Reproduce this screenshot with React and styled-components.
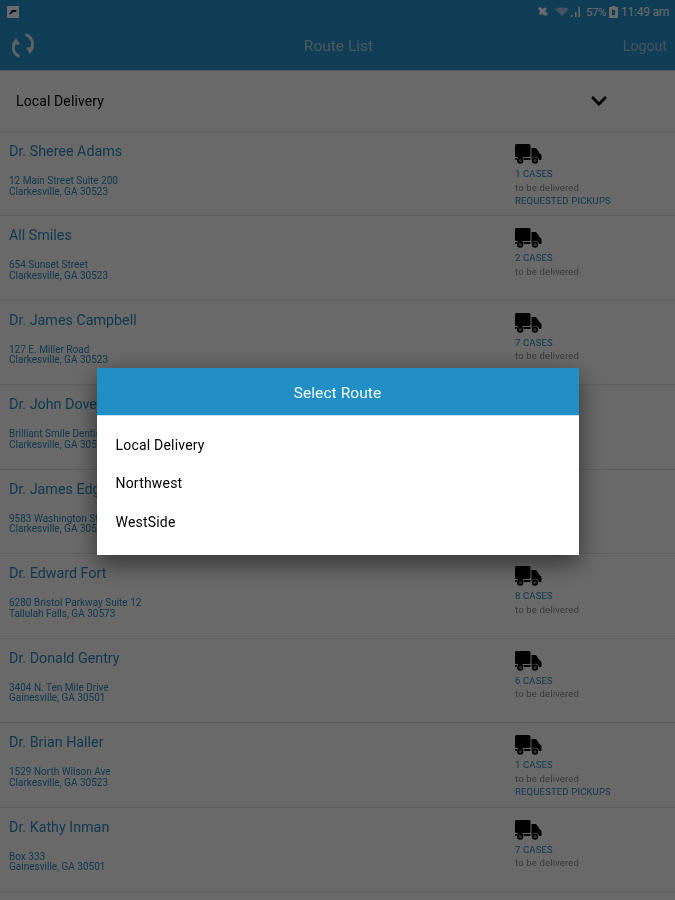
import styled, { createGlobalStyle } from "styled-components";
import { FaChevronDown } from "react-icons/fa";

const stops = [
  { name: "Dr. Sheree Adams", line1: "12 Main Street Suite 200", line2: "Clarkesville, GA 30523", cases: 1, pickups: true },
  { name: "All Smiles", line1: "654 Sunset Street", line2: "Clarkesville, GA 30523", cases: 2 },
  { name: "Dr. James Campbell", line1: "127 E. Miller Road", line2: "Clarkesville, GA 30523", cases: 7 },
  { name: "Dr. John Dove", line1: "Brilliant Smile Dentistry", line2: "Clarkesville, GA 30523", cases: 3 },
  { name: "Dr. James Edge", line1: "9583 Washington Street", line2: "Clarkesville, GA 30523", cases: 4 },
  { name: "Dr. Edward Fort", line1: "6280 Bristol Parkway Suite 12", line2: "Tallulah Falls, GA 30573", cases: 8 },
  { name: "Dr. Donald Gentry", line1: "3404 N. Ten Mile Drive", line2: "Gainesville, GA 30501", cases: 6 },
  { name: "Dr. Brian Haller", line1: "1529 North Wilson Ave", line2: "Clarkesville, GA 30523", cases: 1, pickups: true },
  { name: "Dr. Kathy Inman", line1: "Box 333", line2: "Gainesville, GA 30501", cases: 7 },
];

const routes = ["Local Delivery", "Northwest", "WestSide"];

const GlobalStyle = createGlobalStyle`
  html, body {
    margin: 0;
    height: 900px;
    overflow: hidden;
    background: #fff;
    font-family: Roboto, "Liberation Sans", sans-serif;
  }
`;

const Page = styled.div`
  position: relative;
  width: 675px;
  height: 900px;
  overflow: hidden;
  filter: blur(0.45px);
`;

const Header = styled.header`
  height: 71px;
  box-sizing: border-box;
  background: #2695d0;
  color: #fff;
  display: flex;
  flex-direction: column;
  border-bottom: 1px solid #cfd6da;
`;

const StatusBar = styled.div`
  height: 24px;
  display: flex;
  align-items: center;
  padding: 0 6px 0 7px;
  font-size: 12px;
`;

const StatusRight = styled.div`
  margin-left: auto;
  display: flex;
  align-items: center;
  gap: 3px;
  letter-spacing: -0.25px;
`;

const Percent = styled.span`
  font-size: 11.5px;
  letter-spacing: -0.4px;
`;

const TitleBar = styled.div`
  flex: 1;
  display: grid;
  grid-template-columns: 1fr auto 1fr;
  align-items: center;
  padding: 0 8px 3px 10px;
`;

const Title = styled.div`
  font-size: 15.5px;
  color: #b5d3e3;
`;

const Logout = styled.div`
  padding-top: 1px;
  font-size: 14.2px;
  color: #a9cbde;
  justify-self: end;
`;

const Picker = styled.div`
  height: 61px;
  box-sizing: border-box;
  display: flex;
  align-items: center;
  justify-content: space-between;
  padding: 0 67px 1px 16px;
  font-size: 14px;
  letter-spacing: 0.12px;
  color: #000;
  border-bottom: 1px solid #e2e2e2;
`;

const Row = styled.div`
  height: 84.45px;
  box-sizing: border-box;
  display: grid;
  grid-template-columns: 515px 1fr;
  padding: 10px 0 0 9px;
  border-bottom: 1px solid #e2e2e2;
`;

const Left = styled.div`
  display: flex;
  flex-direction: column;
`;

const Name = styled.div`
  font-size: 14.3px;
  line-height: 18px;
  color: #2a8cc2;
`;

const Address = styled.div`
  margin-top: 16px;
  font-size: 10px;
  line-height: 10.5px;
  color: #2a8cc2;
`;

const Right = styled.div`
  display: flex;
  flex-direction: column;
  margin: 2px 0 0 -9px;
`;

const Small = styled.div`
  font-size: 9.5px;
  line-height: 13.5px;
  letter-spacing: 0.16px;
  color: ${(p) => (p.$muted ? "#8a8a8a" : "#2a8cc2")};
`;

const Cases = styled(Small)`
  margin-top: 3px;
`;

const Overlay = styled.div`
  position: absolute;
  inset: 0;
  background: rgba(0, 0, 0, 0.59);
  display: flex;
  justify-content: center;
  padding-top: 368px;
`;

const Dialog = styled.div`
  width: 482px;
  height: 187px;
  background: #fff;
  box-shadow: 0 8px 24px rgba(0, 0, 0, 0.55);
`;

const DialogTitle = styled.div`
  height: 48px;
  padding-top: 2px;
  display: flex;
  align-items: center;
  justify-content: center;
  background: #228ec6;
  color: #f2fbff;
  font-size: 15.5px;
  letter-spacing: 0.08px;
  border-bottom: 1px solid #bfe3f2;
  box-sizing: border-box;
`;

const RouteList = styled.div`
  display: flex;
  flex-direction: column;
  padding: 9.5px 19px 0;
`;

const RouteItem = styled.div`
  height: 38.5px;
  display: flex;
  align-items: center;
  font-size: 14px;
  letter-spacing: 0.2px;
  color: #000;
`;

const Truck = () => (
  <svg width="27" height="20" viewBox="0 0 27 20" fill="#000">
    <rect x="0" y="0" width="15.500" height="13" rx="1.500" />
    <path d="M16.500 4h3.500c.8 0 1.400.4 1.800 1l3 4.500c1 .4 1.700 1.200 1.700 2.300V15c0 .6-.4 1-1 1h-1.500a3.800 3.800 0 0 0-7.500 0z" />
    <path d="M0 14h15.500v2H9a3.800 3.800 0 0 0-7.500 0H1c-.6 0-1-.4-1-1z" />
    <circle cx="5.200" cy="16.500" r="2.400" stroke="#000" strokeWidth="1.600" fill="#777" />
    <circle cx="20" cy="16.500" r="2.400" stroke="#000" strokeWidth="1.600" fill="#777" />
  </svg>
);

const SyncIcon = () => (
  <svg width="26" height="26" viewBox="0 0 26 26" fill="none" stroke="#e6eef2" strokeWidth="2.800">
    <path d="M9.500 23.500C4 21.500 1.500 15 5 9.500" />
    <path d="M15.500 1.500C21.500 3.500 24.500 10 21 16" />
    <path d="M1.500 12l4.500-7 4 6.500z" fill="#e6eef2" stroke="none" />
    <path d="M24.500 14l-4.500 7-4-6.500z" fill="#e6eef2" stroke="none" />
  </svg>
);

const StatusIcons = () => (
  <svg width="46" height="12" viewBox="0 0 46 12" fill="#fff">
    <path d="M1 2l2-1 3 2 2-2 2 2-2 2 3 3-2 2-4-2-2 1-1-1 1-3z" />
    <path d="M18 3c3-2 10-2 14 0l-7 7z" opacity="0.55" />
    <rect x="34" y="9" width="1.500" height="2" />
    <rect x="38" y="6" width="1.500" height="5" />
    <rect x="41.500" y="1" width="1.500" height="10" />
  </svg>
);

const BatteryIcon = () => (
  <svg width="9" height="12" viewBox="0 0 9 12" fill="#fff">
    <path d="M2.500 0h4v1H9v11H0V1h2.500z" />
    <path d="M3 4h3v5H3z" fill="#2695d0" />
  </svg>
);

const PictureIcon = () => (
  <svg width="12" height="12" viewBox="0 0 12 12">
    <rect width="12" height="12" rx="1" fill="#fff" />
    <path d="M2 8l3-4h5v-1l-1 3-3 0-2 2z" fill="#124" />
  </svg>
);

export default function App() {
  return (
    <Page>
      <GlobalStyle />
      <Header>
        <StatusBar>
          <PictureIcon />
          <StatusRight>
            <StatusIcons />
            <Percent>57%</Percent>
            <BatteryIcon />
            <span>11:49 am</span>
          </StatusRight>
        </StatusBar>
        <TitleBar>
          <SyncIcon />
          <Title>Route List</Title>
          <Logout>Logout</Logout>
        </TitleBar>
      </Header>
      <Picker>
        <span>Local Delivery</span>
        <FaChevronDown size={18} />
      </Picker>
      {stops.map((stop) => (
        <Row key={stop.name}>
          <Left>
            <Name>{stop.name}</Name>
            <Address>
              {stop.line1}
              <br />
              {stop.line2}
            </Address>
          </Left>
          <Right>
            <Truck />
            <Cases>{stop.cases} CASES</Cases>
            <Small $muted>to be delivered</Small>
            {stop.pickups && <Small>REQUESTED PICKUPS</Small>}
          </Right>
        </Row>
      ))}
      <Overlay>
        <Dialog>
          <DialogTitle>Select Route</DialogTitle>
          <RouteList>
            {routes.map((route) => (
              <RouteItem key={route}>{route}</RouteItem>
            ))}
          </RouteList>
        </Dialog>
      </Overlay>
    </Page>
  );
}
